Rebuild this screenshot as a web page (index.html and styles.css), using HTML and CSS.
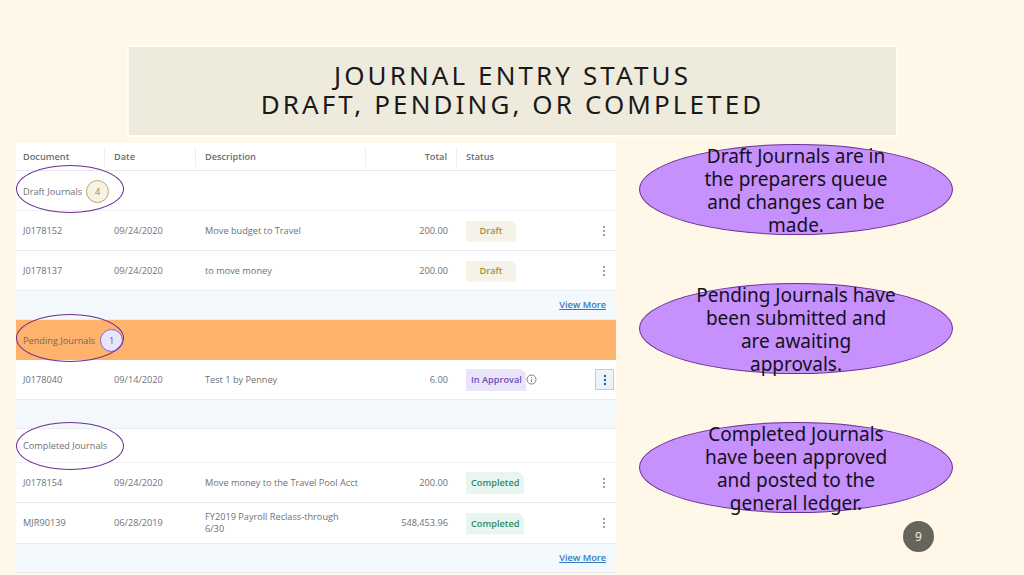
FILE: index.html
```html
<!DOCTYPE html>
<html lang="en">
<head>
  <meta charset="UTF-8">
  <title>Journal Entry Status</title>
  <link rel="stylesheet" href="styles.css">
</head>
<body>

<header class="title">
  <h1>Journal Entry Status<br>Draft, Pending, or Completed</h1>
</header>

<main class="content">
  <section class="journals">
    <div class="row head">
      <div>Document</div>
      <div>Date</div>
      <div>Description</div>
      <div class="num">Total</div>
      <div>Status</div>
    </div>

    <div class="group draft-group">
      <span>Draft Journals</span>
      <span class="count count-draft">4</span>
      <span class="ring"></span>
    </div>
    <div class="row">
      <div>J0178152</div>
      <div>09/24/2020</div>
      <div>Move budget to Travel</div>
      <div class="num">200.00</div>
      <div class="status">
        <span class="pill pill-draft">Draft</span>
        <svg class="kebab" width="4" height="12" viewBox="0 0 4 12"><circle cx="2" cy="2" r="1.1"/><circle cx="2" cy="6" r="1.1"/><circle cx="2" cy="10" r="1.1"/></svg>
      </div>
    </div>
    <div class="row">
      <div>J0178137</div>
      <div>09/24/2020</div>
      <div>to move money</div>
      <div class="num">200.00</div>
      <div class="status">
        <span class="pill pill-draft">Draft</span>
        <svg class="kebab" width="4" height="12" viewBox="0 0 4 12"><circle cx="2" cy="2" r="1.1"/><circle cx="2" cy="6" r="1.1"/><circle cx="2" cy="10" r="1.1"/></svg>
      </div>
    </div>
    <div class="more"><a href="#">View More</a></div>

    <div class="group pending-group">
      <span>Pending Journals</span>
      <span class="count count-pending">1</span>
      <span class="ring"></span>
    </div>
    <div class="row">
      <div>J0178040</div>
      <div>09/14/2020</div>
      <div>Test 1 by Penney</div>
      <div class="num">6.00</div>
      <div class="status">
        <span class="pill pill-approval">In Approval</span>
        <svg class="info" width="11" height="11" viewBox="0 0 11 11"><circle cx="5.5" cy="5.5" r="4.5"/><path d="M5.5 5v3M5.5 3v1"/></svg>
        <span class="kebab-btn">
          <svg width="4" height="12" viewBox="0 0 4 12"><circle cx="2" cy="2" r="1.2"/><circle cx="2" cy="6" r="1.2"/><circle cx="2" cy="10" r="1.2"/></svg>
        </span>
      </div>
    </div>
    <div class="more"></div>

    <div class="group completed-group">
      <span>Completed Journals</span>
      <span class="ring"></span>
    </div>
    <div class="row">
      <div>J0178154</div>
      <div>09/24/2020</div>
      <div>Move money to the Travel Pool Acct</div>
      <div class="num">200.00</div>
      <div class="status">
        <span class="pill pill-completed">Completed</span>
        <svg class="kebab" width="4" height="12" viewBox="0 0 4 12"><circle cx="2" cy="2" r="1.1"/><circle cx="2" cy="6" r="1.1"/><circle cx="2" cy="10" r="1.1"/></svg>
      </div>
    </div>
    <div class="row row-tall">
      <div>MJR90139</div>
      <div>06/28/2019</div>
      <div>FY2019 Payroll Reclass-through 6/30</div>
      <div class="num">548,453.96</div>
      <div class="status">
        <span class="pill pill-completed">Completed</span>
        <svg class="kebab" width="4" height="12" viewBox="0 0 4 12"><circle cx="2" cy="2" r="1.1"/><circle cx="2" cy="6" r="1.1"/><circle cx="2" cy="10" r="1.1"/></svg>
      </div>
    </div>
    <div class="more"><a href="#">View More</a></div>
  </section>

  <aside class="notes">
    <div class="note">Draft Journals are in the preparers queue and changes can be made.</div>
    <div class="note">Pending Journals have been submitted and are awaiting approvals.</div>
    <div class="note">Completed Journals have been approved and posted to the general ledger.</div>
    <div class="page-num">9</div>
  </aside>
</main>

</body>
</html>
```

FILE: styles.css
```css
* {
  box-sizing: border-box;
  margin: 0;
  padding: 0;
}
body {
  width: 1024px;
  height: 575px;
  overflow: hidden;
  background: #fff8e8;
  font-family: 'Open Sans', sans-serif;
  padding-top: 45px;
}

.title {
  width: 771px;
  height: 92px;
  margin-left: 127px;
  padding-bottom: 3px;
  background: #efebdc;
  border: 2px solid #fffdf7;
  display: flex;
  align-items: center;
  justify-content: center;
}
.title h1 {
  font-family: 'Noto Sans', sans-serif;
  font-size: 26px;
  font-weight: 400;
  line-height: 29px;
  letter-spacing: 3.1px;
  text-align: center;
  text-transform: uppercase;
  color: #1a1a1a;
}

.content {
  display: flex;
  padding: 6px 0 0 16px;
}

.journals {
  width: 600px;
  background: #fff;
  font-size: 9.2px;
  line-height: 12px;
  color: #6e7176;
}
.row {
  display: grid;
  grid-template-columns: 89px 91px 170px 91px 1fr;
  align-items: center;
  height: 40px;
  border-bottom: 1px solid #e9edf1;
}
.row-tall {
  height: 41px;
}
.row > div {
  padding-left: 9px;
}
.row > div:first-child {
  padding-left: 7px;
}
.row > div:nth-child(3) {
  padding-right: 7px;
}
.row > .num {
  padding: 0 9px 0 0;
  text-align: right;
}
.head {
  height: 28px;
  font-weight: 600;
  color: #6a6e74;
  border-bottom: 1px solid #e3e7ec;
}
.head > div {
  height: 20px;
  line-height: 20px;
  border-right: 1px solid #eceef1;
}
.head > div:last-child {
  border-right: none;
}

.group {
  position: relative;
  display: flex;
  align-items: center;
  gap: 5px;
  height: 40px;
  padding-left: 7px;
  border-bottom: 1px solid #eef0f3;
}
.draft-group {
  gap: 4px;
  padding-top: 2px;
}
.pending-group {
  padding-top: 1px;
  background: #ffb26b;
  color: #6c6a62;
  border-bottom: none;
}
.completed-group {
  height: 34px;
}
.count {
  width: 23px;
  height: 23px;
  border-radius: 50%;
  display: flex;
  align-items: center;
  justify-content: center;
}
.count-draft {
  background: #f6f2e4;
  border: 1px solid #b7a868;
  color: #a08c3a;
}
.count-pending {
  background: #e9e5fb;
  border: 1px solid #7a6cc2;
  color: #6a5bb0;
}
.ring {
  position: absolute;
  left: 0;
  top: -6px;
  width: 108px;
  height: 48px;
  border: 1.5px solid #6b2f94;
  border-radius: 50%;
}
.completed-group .ring {
  top: -7px;
}

.status {
  display: flex;
  align-items: center;
  gap: 6px;
  height: 100%;
  padding-right: 10px;
}
.pill {
  display: flex;
  align-items: center;
  height: 21px;
  margin-top: 1px;
  padding: 0 5px;
  font-weight: 600;
  white-space: nowrap;
  clip-path: polygon(0 0, calc(100% - 5px) 0, 100% 5px, 100% 100%, 0 100%);
}
.pill-draft {
  width: 50px;
  justify-content: center;
  background: #f5f2e7;
  color: #a98f3c;
}
.pill-approval {
  width: 60px;
  height: 22px;
  background: #eae5fb;
  color: #6a4fb8;
}
.pill-completed {
  width: 58px;
  height: 22px;
  background: #e9f6f0;
  color: #2c8a62;
}
.kebab {
  margin-left: auto;
  fill: #7d8794;
}
.info {
  margin-left: -6px;
  fill: none;
  stroke: #6e7176;
  stroke-width: 0.9;
}
.kebab-btn {
  margin: 0 -8px 0 auto;
  width: 19px;
  height: 21px;
  display: flex;
  align-items: center;
  justify-content: center;
  background: #eef3f8;
  border: 1px solid #c5ccd6;
  fill: #1f63a8;
}

.more {
  height: 29px;
  padding-right: 10px;
  display: flex;
  align-items: center;
  justify-content: flex-end;
  background: #f3f8fc;
  border-bottom: 1px solid #e9edf1;
}
.more a {
  font-weight: 600;
  color: #2f7cc0;
}

.notes {
  position: relative;
  margin-left: 23px;
  width: 314px;
  display: flex;
  flex-direction: column;
  gap: 48px;
  padding-top: 1px;
}
.note {
  height: 91px;
  padding: 2px 54px 0;
  display: flex;
  align-items: center;
  justify-content: center;
  text-align: center;
  font-family: 'Noto Sans', sans-serif;
  font-size: 19px;
  line-height: 23px;
  color: #14101c;
  background: #c690fd;
  border: 1px solid #6b2f94;
  border-radius: 50%;
}
.page-num {
  position: absolute;
  left: 264px;
  top: 378px;
  width: 31px;
  height: 31px;
  border-radius: 50%;
  background: #66645b;
  color: #f4f2ea;
  font-size: 12px;
  display: flex;
  align-items: center;
  justify-content: center;
}
```
